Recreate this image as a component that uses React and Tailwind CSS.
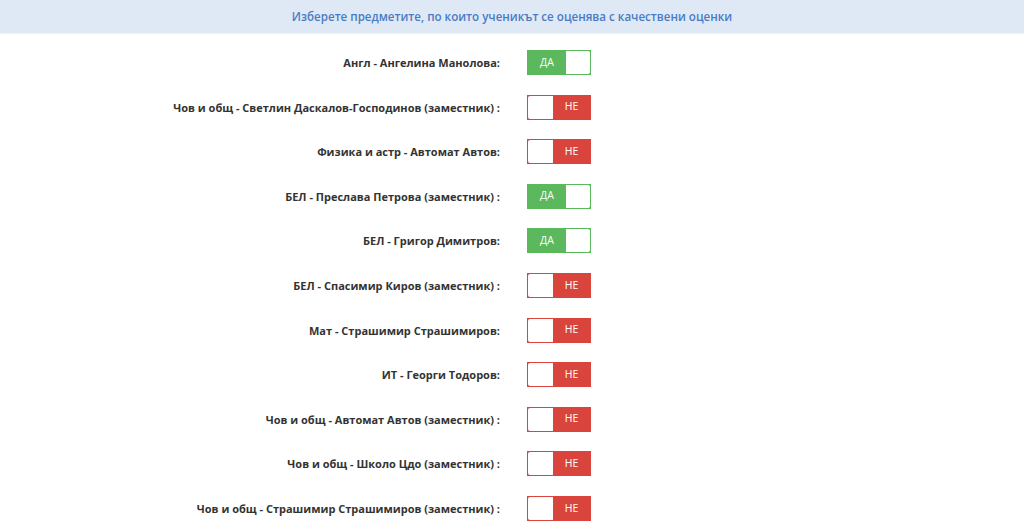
const rows = [
  { label: 'Англ - Ангелина Манолова:', on: true },
  { label: 'Чов и общ - Светлин Даскалов-Господинов (заместник) :', on: false },
  { label: 'Физика и астр - Автомат Автов:', on: false },
  { label: 'БЕЛ - Преслава Петрова (заместник) :', on: true },
  { label: 'БЕЛ - Григор Димитров:', on: true },
  { label: 'БЕЛ - Спасимир Киров (заместник) :', on: false },
  { label: 'Мат - Страшимир Страшимиров:', on: false },
  { label: 'ИТ - Георги Тодоров:', on: false },
  { label: 'Чов и общ - Автомат Автов (заместник) :', on: false },
  { label: 'Чов и общ - Школо Цдо (заместник) :', on: false },
  { label: 'Чов и общ - Страшимир Страшимиров (заместник) :', on: false },
];

const Toggle = ({ on }) =>
  on ? (
    <div className="flex h-[25px] w-[64px] border border-[#5cb85c] bg-[#5cb85c]">
      <span className="flex w-[38px] items-center justify-center text-[10.5px] font-medium text-white">ДА</span>
      <span className="flex-1 bg-white rounded-r-[2px]" />
    </div>
  ) : (
    <div className="flex h-[25px] w-[64px] border border-[#d9453d] bg-[#d9453d]">
      <span className="w-[25px] bg-white rounded-l-[2px]" />
      <span className="flex flex-1 items-center justify-center text-[10.5px] font-medium text-white">НЕ</span>
    </div>
  );

export default function App() {
  return (
    <div className="min-h-screen bg-white" style={{ fontFamily: '"Open Sans", "Noto Sans", sans-serif' }}>
      <div className="flex h-[34px] items-center justify-center bg-[#dfe9f6] border-b border-[#eef2f8]">
        <span className="text-[11.6px] font-semibold text-[#4a7bc4]">
          Изберете предметите, по които ученикът се оценява с качествени оценки
        </span>
      </div>
      <div className="flex flex-col pt-[16px]">
        {rows.map((r) => (
          <div key={r.label} className="flex h-[44.6px] items-start">
            <div className="w-[500px] pt-[5px] text-right text-[11px] font-bold text-[#333]">{r.label}</div>
            <div className="ml-[27px]">
              <Toggle on={r.on} />
            </div>
          </div>
        ))}
      </div>
    </div>
  );
}
